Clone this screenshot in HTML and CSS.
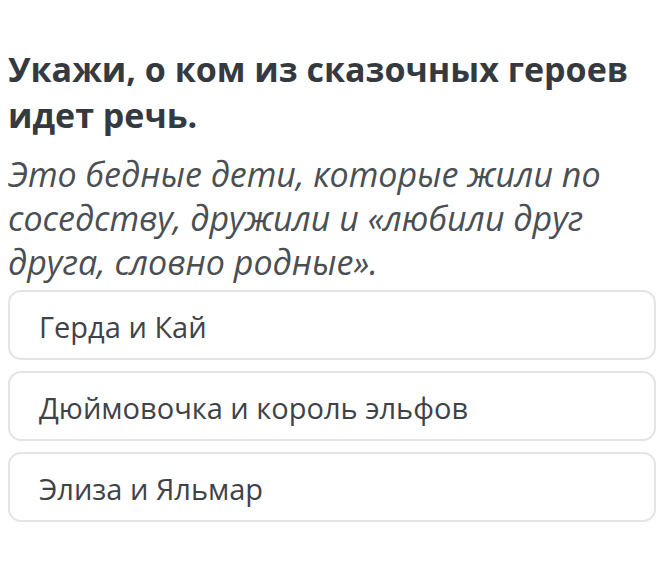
FILE: index.html
```html
<!DOCTYPE html>
<html lang="ru">
<head>
<meta charset="utf-8">
<link rel="stylesheet" href="styles.css">
</head>
<body>
<main class="quiz">
  <h1 class="question">Укажи, о ком из сказочных героев идет речь.</h1>
  <p class="prompt">Это бедные дети, которые жили по соседству, дружили и «любили друг друга, словно родные».</p>
  <ul class="options">
    <li class="option">Герда и Кай</li>
    <li class="option">Дюймовочка и король эльфов</li>
    <li class="option">Элиза и Яльмар</li>
  </ul>
</main>
</body>
</html>
```
FILE: styles.css
```css
html, body {
  margin: 0;
  padding: 0;
  background: #ffffff;
}
.quiz {
  font-family: "Open Sans", "Noto Sans", sans-serif;
  padding: 46px 0 0 8px;
  width: 648px;
}
.question {
  margin: 0;
  font-size: 34px;
  font-weight: 700;
  line-height: 46px;
  color: #343a40;
}
.prompt {
  margin: 14px 0 0 0;
  font-size: 34px;
  font-style: italic;
  font-weight: 400;
  line-height: 44px;
  color: #4a4f54;
}
.options {
  list-style: none;
  margin: 6px 0 0 0;
  padding: 0;
  display: flex;
  flex-direction: column;
  gap: 11px;
}
.option {
  box-sizing: border-box;
  height: 70px;
  display: flex;
  align-items: center;
  padding: 3px 0 0 29px;
  border: 2px solid #e4e4e4;
  border-radius: 13px;
  font-size: 29px;
  color: #3f4347;
}
```
